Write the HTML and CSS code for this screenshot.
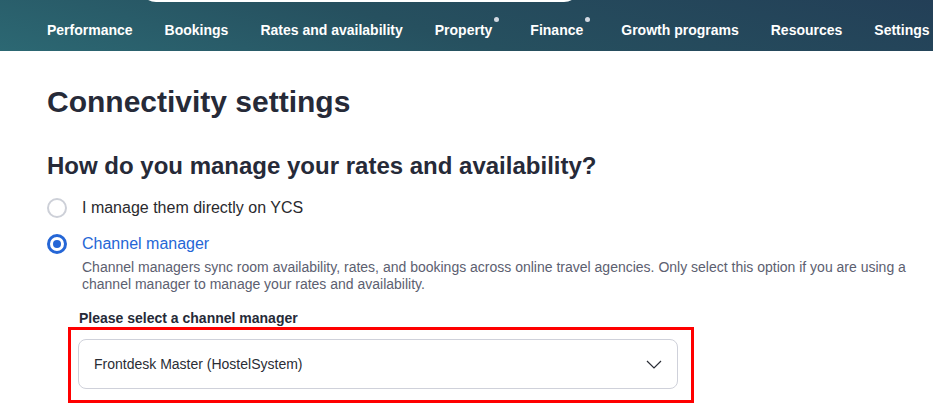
FILE: index.html
```html
<!DOCTYPE html>
<html lang="en">
<head>
<meta charset="utf-8">
<title>Connectivity settings</title>
<link rel="stylesheet" href="styles.css">
</head>
<body>
<header class="topbar">
  <div class="search-edge"></div>
  <nav class="nav">
    <a class="nav-item">Performance</a>
    <a class="nav-item">Bookings</a>
    <a class="nav-item">Rates and availability</a>
    <a class="nav-item has-dot">Property</a>
    <a class="nav-item has-dot">Finance</a>
    <a class="nav-item">Growth programs</a>
    <a class="nav-item">Resources</a>
    <a class="nav-item">Settings</a>
  </nav>
</header>
<main class="page">
  <h1 class="title">Connectivity settings</h1>
  <h2 class="subtitle">How do you manage your rates and availability?</h2>
  <div class="options">
    <label class="option">
      <span class="radio"></span>
      <span class="option-text">I manage them directly on YCS</span>
    </label>
    <div class="option checked">
      <span class="radio"><span class="radio-dot"></span></span>
      <div class="option-body">
        <span class="option-text">Channel manager</span>
        <p class="option-desc">Channel managers sync room availability, rates, and bookings across online travel agencies. Only select this option if you are using a channel manager to manage your rates and availability.</p>
      </div>
    </div>
  </div>
  <div class="field">
    <div class="field-label">Please select a channel manager</div>
    <div class="highlight">
      <div class="select">
        <span class="select-value">Frontdesk Master (HostelSystem)</span>
        <svg class="chevron" width="16" height="9" viewBox="0 0 16 9"><path d="M1 1 L8 8 L15 1" fill="none" stroke="#2a2d35" stroke-width="1.2"/></svg>
      </div>
    </div>
  </div>
</main>
</body>
</html>
```
FILE: styles.css
```css
* { box-sizing: border-box; }
html, body { margin: 0; padding: 0; }
body {
  font-family: "Liberation Sans", Arial, sans-serif;
  background: #ffffff;
  color: #2a2d3a;
  width: 933px;
  overflow: hidden;
}
.topbar {
  position: relative;
  height: 51px;
  background: linear-gradient(15deg, #2c6873 0%, #26505f 45%, #233f57 100%);
  overflow: hidden;
}
.search-edge {
  position: absolute;
  left: 140px;
  top: -30px;
  width: 440px;
  height: 32px;
  background: #ffffff;
  border-radius: 0 0 16px 16px;
}
.nav {
  display: flex;
  gap: 32px;
  padding: 22px 0 0 47px;
  white-space: nowrap;
}
.nav-item {
  position: relative;
  color: #ffffff;
  font-weight: bold;
  font-size: 14px;
  line-height: 16px;
}
.nav-item.has-dot { padding-right: 6px; }
.nav-item.has-dot::after {
  content: "";
  position: absolute;
  right: -1px;
  top: -5px;
  width: 5px;
  height: 5px;
  border-radius: 50%;
  background: #d3d9e2;
}
.page {
  padding: 0 0 0 47px;
}
.title {
  margin: 33px 0 0;
  font-size: 30px;
  line-height: 36px;
  font-weight: bold;
  color: #262a38;
}
.subtitle {
  margin: 31px 0 0;
  font-size: 24px;
  line-height: 30px;
  font-weight: bold;
  color: #262a38;
}
.options {
  margin-top: 17px;
  display: flex;
  flex-direction: column;
  gap: 16px;
}
.option {
  display: flex;
  align-items: flex-start;
  gap: 15px;
}
.radio {
  flex: none;
  width: 20px;
  height: 20px;
  border-radius: 50%;
  border: 2px solid #cdd0d8;
  display: flex;
  align-items: center;
  justify-content: center;
}
.checked .radio {
  border: 3px solid #2566d6;
}
.radio-dot {
  width: 8px;
  height: 8px;
  border-radius: 50%;
  background: #2566d6;
}
.option-text {
  font-size: 16px;
  line-height: 20px;
  color: #2a2a2e;
}
.checked .option-text { color: #2566d6; }
.option-desc {
  margin: 5px 0 0;
  font-size: 14px;
  line-height: 17px;
  color: #5c6070;
  max-width: 840px;
}
.field {
  margin: 17px 0 0 21px;
}
.field-label {
  padding-left: 11px;
  font-size: 14px;
  font-weight: bold;
  line-height: 16px;
  color: #262a38;
}
.highlight {
  margin-top: 1px;
  width: 626px;
  border: 3px solid #ff0000;
  padding: 9px 13px 11px 7px;
}
.select {
  height: 50px;
  border: 1px solid #cfd1da;
  border-radius: 8px;
  display: flex;
  align-items: center;
  justify-content: space-between;
  padding: 0 15px 0 15px;
}
.select-value {
  font-size: 14px;
  color: #2a2d35;
}
.chevron { display: block; }
```
